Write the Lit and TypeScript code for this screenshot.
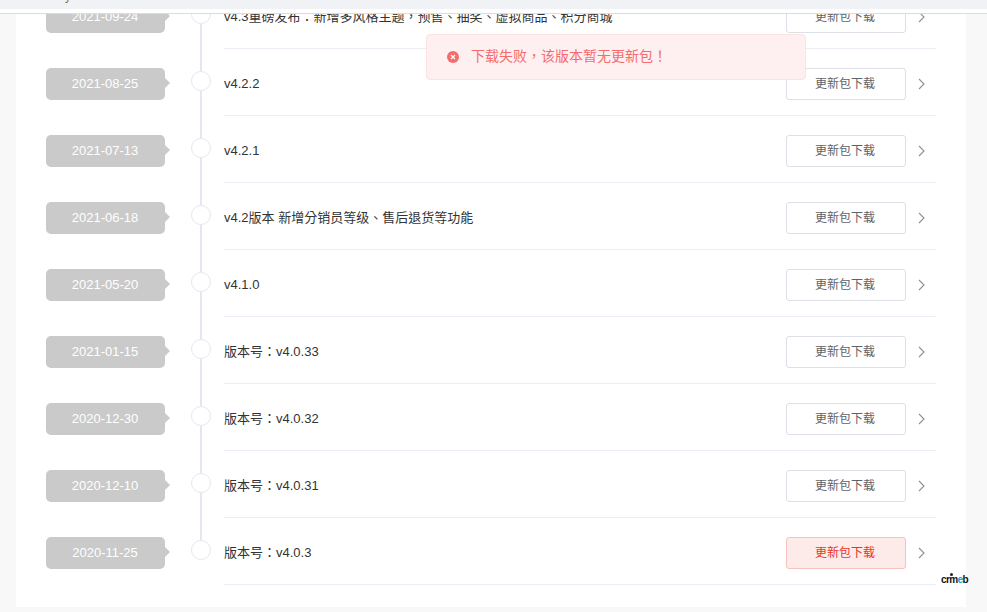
import { LitElement, html, css, svg } from "lit";
import { customElement } from "lit/decorators.js";

const rows: [string, string][] = [
  ["2021-09-24", "v4.3重磅发布：新增多风格主题，预售、抽奖、虚拟商品、积分商城"],
  ["2021-08-25", "v4.2.2"],
  ["2021-07-13", "v4.2.1"],
  ["2021-06-18", "v4.2版本 新增分销员等级、售后退货等功能"],
  ["2021-05-20", "v4.1.0"],
  ["2021-01-15", "版本号：v4.0.33"],
  ["2020-12-30", "版本号：v4.0.32"],
  ["2020-12-10", "版本号：v4.0.31"],
  ["2020-11-25", "版本号：v4.0.3"],
];

const chevron = svg`<polyline points="1,1 6,6 1,11" fill="none" stroke="#8c8f96" stroke-width="1.1"/>`;

@customElement("app-root")
export class AppRoot extends LitElement {
  static styles = css`
    :host {
      display: block;
      position: relative;
      height: 612px;
      overflow: hidden;
      background: #f8f8f9;
      font-family: "Liberation Sans", "Noto Sans CJK TC", sans-serif;
      color: #333;
    }
    .header {
      height: 13px;
      background: #fff;
      border-bottom: 1px solid #dcdcdc;
      position: relative;
      z-index: 2;
    }
    .tabs {
      height: 9px;
      background: #f0f2f5;
      overflow: hidden;
    }
    .tabs span {
      display: block;
      margin: -11px 0 0 65px;
      font-size: 12px;
      line-height: 14px;
      color: #8a6d3b;
    }
    .view {
      height: 598px;
      overflow: hidden;
    }
    .card {
      width: 950px;
      margin-left: 16px;
      height: 593px;
      box-sizing: border-box;
      background: #fff;
      padding: 0 30px;
      overflow: hidden;
    }
    .list {
      margin-top: -32px;
    }
    .row {
      display: flex;
      height: 67px;
    }
    .pill {
      position: relative;
      flex: none;
      width: 119px;
      height: 32px;
      margin-top: 19px;
      background: #cacaca;
      border-radius: 5px;
      color: #fff;
      font-size: 13px;
      line-height: 32px;
      text-align: center;
      padding-right: 1px;
      box-sizing: border-box;
    }
    .pill::after {
      content: "";
      position: absolute;
      left: 100%;
      top: 10px;
      border-left: 5px solid #cacaca;
      border-top: 5px solid transparent;
      border-bottom: 5px solid transparent;
    }
    .node {
      flex: none;
      width: 20px;
      margin: 0 13px 0 26px;
      display: flex;
      flex-direction: column;
      align-items: center;
    }
    .line {
      width: 2px;
      background: #e4e7ef;
    }
    .line.top {
      height: 22px;
    }
    .line.bottom {
      flex: 1;
    }
    .dot {
      flex: none;
      width: 20px;
      height: 20px;
      box-sizing: border-box;
      border: 1px solid #e4e7ef;
      border-radius: 50%;
      background: #fff;
    }
    .row:last-child .line.bottom {
      visibility: hidden;
    }
    .main {
      flex: 1;
      min-width: 0;
      display: flex;
      align-items: center;
      gap: 12px;
      box-sizing: border-box;
      padding: 19px 11px 15px 0;
      border-bottom: 1px solid #eceef5;
    }
    .title {
      flex: 1;
      font-size: 13px;
      line-height: 18px;
      color: #333;
    }
    .btn {
      flex: none;
      width: 120px;
      height: 32px;
      box-sizing: border-box;
      border: 1px solid #dcdfe6;
      border-radius: 3px;
      background: #fff;
      color: #606266;
      font: inherit;
      font-size: 12px;
      line-height: 16px;
      padding: 0 2px 0 0;
    }
    .btn.active {
      background: #fdebea;
      border-color: #f8c1bd;
      color: #e93323;
    }
    .chev {
      flex: none;
      width: 7px;
      height: 12px;
    }
    .toast {
      position: absolute;
      z-index: 3;
      left: 426px;
      top: 34px;
      width: 380px;
      height: 46px;
      box-sizing: border-box;
      display: flex;
      align-items: center;
      gap: 12px;
      padding-left: 20px;
      background: #fef0f0;
      border: 1px solid #fde2e2;
      border-radius: 4px;
      color: #f56c6c;
      font-size: 14px;
    }
    .toast svg {
      flex: none;
    }
    .toast span {
      line-height: 18px;
      margin-bottom: 2px;
    }
    .logo {
      position: absolute;
      z-index: 3;
      left: 941px;
      top: 573px;
      width: 28px;
      padding-top: 1px;
      font-size: 10px;
      line-height: 11px;
      font-weight: 700;
      letter-spacing: -0.6px;
      color: #111;
      white-space: nowrap;
    }
    .logo i {
      font-style: normal;
      color: #0ea5f0;
    }
    .logo::before {
      content: "";
      position: absolute;
      left: 9px;
      top: 0;
      width: 3px;
      height: 3px;
      border-radius: 50%;
      background: #222;
    }
  `;

  render() {
    return html`
      <div class="header"><div class="tabs"><span>y</span></div></div>
      <div class="view">
        <div class="card">
          <div class="list">
            ${rows.map(
              ([date, title], i) => html`
                <div class="row">
                  <div class="pill">${date}</div>
                  <div class="node">
                    <div class="line top"></div>
                    <div class="dot"></div>
                    <div class="line bottom"></div>
                  </div>
                  <div class="main">
                    <div class="title">${title}</div>
                    <button class="btn ${i === rows.length - 1 ? "active" : ""}">更新包下载</button>
                    <svg class="chev" viewBox="0 0 7 12">${chevron}</svg>
                  </div>
                </div>
              `
            )}
          </div>
        </div>
      </div>
      <div class="toast">
        <svg width="12" height="12" viewBox="0 0 12 12">
          <circle cx="6" cy="6" r="6" fill="#f56c6c" />
          <path d="M4 4l4 4M8 4l-4 4" stroke="#fff" stroke-width="1.2" fill="none" />
        </svg>
        <span>下载失败，该版本暂无更新包！</span>
      </div>
      <div class="logo">crm<i>e</i>b</div>
    `;
  }
}
